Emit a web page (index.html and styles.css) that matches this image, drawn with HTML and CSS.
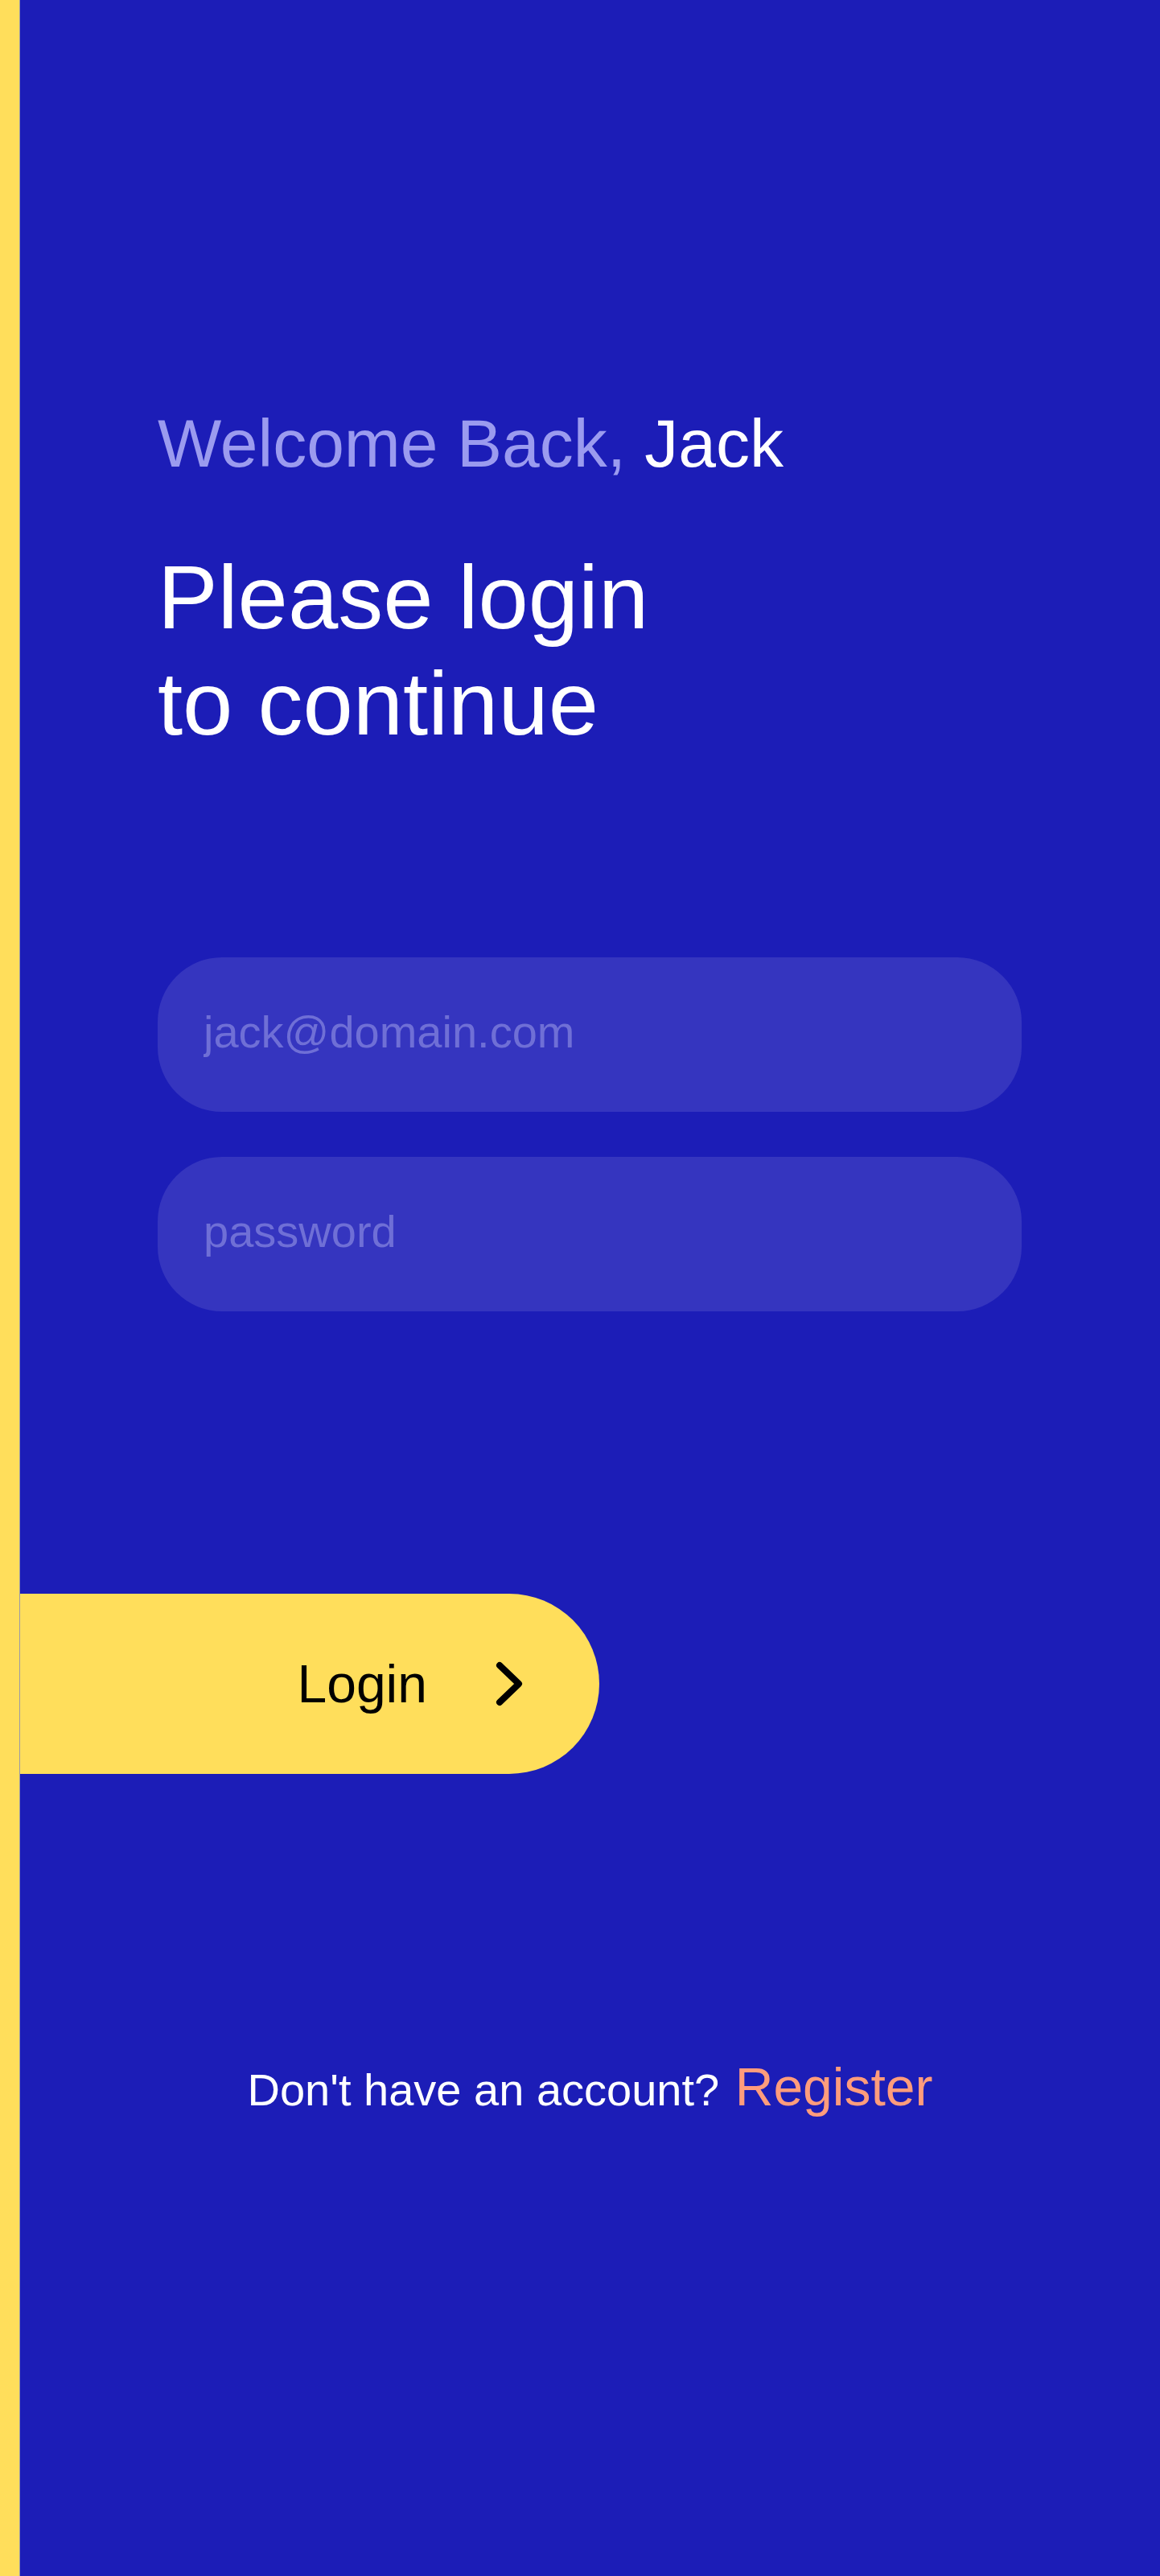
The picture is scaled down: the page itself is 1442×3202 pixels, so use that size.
FILE: index.html
```html
<!DOCTYPE html>
<html lang="en">
<head>
<meta charset="utf-8">
<title>Login</title>
<link rel="stylesheet" href="styles.css">
</head>
<body>
<div class="page">
  <div class="strip"></div>
  <main class="main">
    <section class="intro">
      <p class="welcome">Welcome Back, <span class="name">Jack</span></p>
      <h1 class="title">Please login<br>to continue</h1>
    </section>
    <form class="form">
      <input class="field" type="email" placeholder="jack@domain.com">
      <input class="field" type="password" placeholder="password">
    </form>
    <button class="login" type="button">
      <span class="login-label">Login</span>
      <svg class="chevron" width="40" height="60" viewBox="0 0 40 60" aria-hidden="true">
        <path d="M9 7 L33 30 L9 53" fill="none" stroke="#000" stroke-width="8" stroke-linecap="round" stroke-linejoin="round"/>
      </svg>
    </button>
    <p class="footer">Don't have an account? <a class="register" href="#">Register</a></p>
  </main>
</div>
</body>
</html>
```

FILE: styles.css
```css
html, body {
  margin: 0;
  padding: 0;
}

body {
  background: #1c1db7;
  font-family: "Liberation Sans", Arial, sans-serif;
}

.page {
  display: flex;
  min-height: 3202px;
}

.strip {
  width: 24px;
  flex: 0 0 24px;
  background: #ffde5b;
  border-right: 1px solid #9b99a6;
}

.main {
  flex: 1;
  display: flex;
  flex-direction: column;
  padding-top: 503px;
}

.intro {
  padding-left: 171px;
}

.welcome {
  margin: 0;
  font-size: 84px;
  line-height: 96px;
  color: #9b9bef;
  white-space: nowrap;
}

.name {
  color: #ffffff;
}

.title {
  margin: 78px 0 0;
  font-size: 112px;
  line-height: 132px;
  font-weight: 400;
  color: #ffffff;
}

.form {
  margin: 249px 0 0;
  padding-left: 171px;
  display: flex;
  flex-direction: column;
  gap: 56px;
}

.field {
  box-sizing: border-box;
  width: 1074px;
  height: 192px;
  border: 0;
  border-radius: 80px;
  background: #3535bf;
  padding: 0 40px 8px 57px;
  font-family: "Liberation Sans", Arial, sans-serif;
  font-size: 56px;
  color: #ffffff;
  outline: none;
}

.field::placeholder {
  color: #6f6fd6;
  opacity: 1;
}

.login {
  box-sizing: border-box;
  margin-top: 351px;
  width: 720px;
  height: 224px;
  border: 0;
  border-radius: 0 112px 112px 0;
  background: #ffde5b;
  display: flex;
  align-items: center;
  justify-content: flex-end;
  gap: 81px;
  padding: 0 93px 0 0;
  font-family: "Liberation Sans", Arial, sans-serif;
  color: #000000;
  cursor: pointer;
}

.login-label {
  font-size: 66px;
  line-height: 76px;
}

.chevron {
  display: block;
  flex: 0 0 40px;
}

.footer {
  margin: 351px 0 0;
  text-align: center;
  font-size: 56px;
  line-height: 76px;
  color: #ffffff;
}

.register {
  color: #ff9c7c;
  font-size: 66px;
  line-height: 76px;
  text-decoration: none;
  margin-left: 4px;
}
```
